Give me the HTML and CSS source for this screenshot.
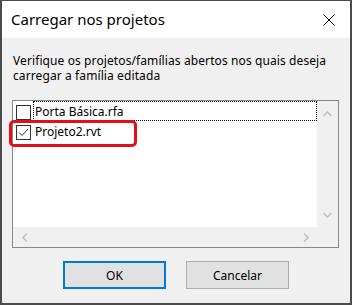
FILE: index.html
```html
<!DOCTYPE html>
<html lang="pt">
<head>
<meta charset="utf-8">
<title>Carregar nos projetos</title>
<link rel="stylesheet" href="styles.css">
</head>
<body>
<div class="window">
  <div class="titlebar">
    <span class="title">Carregar nos projetos</span>
    <svg class="close" width="12" height="12" viewBox="0 0 12 12"><path d="M0.5 0.5 L11.5 11.5 M11.5 0.5 L0.5 11.5" stroke="#000" stroke-width="1" fill="none"/></svg>
  </div>
  <div class="content">
    <p class="prompt">Verifique os projetos/famílias abertos nos quais deseja carregar a família editada</p>
    <div class="listbox">
      <div class="items">
        <div class="item focused">
          <span class="check"></span>
          <span class="label">Porta Básica.rfa</span>
        </div>
        <div class="item">
          <span class="check"><svg width="13" height="13" viewBox="0 0 13 13"><path d="M2 6.5 L5 9.5 L11 3" stroke="#333" stroke-width="1" fill="none"/></svg></span>
          <span class="label">Projeto2.rvt</span>
        </div>
      </div>
      <div class="vscroll">
        <svg width="9" height="6" viewBox="0 0 9 6"><path d="M0.5 5 L4.5 1 L8.5 5" stroke="#c2c2c2" stroke-width="1.6" fill="none"/></svg>
        <svg width="9" height="6" viewBox="0 0 9 6"><path d="M0.5 1 L4.5 5 L8.5 1" stroke="#c2c2c2" stroke-width="1.6" fill="none"/></svg>
      </div>
      <div class="hscroll">
        <svg width="6" height="9" viewBox="0 0 6 9"><path d="M5 0.5 L1 4.5 L5 8.5" stroke="#c2c2c2" stroke-width="1.6" fill="none"/></svg>
        <svg width="6" height="9" viewBox="0 0 6 9"><path d="M1 0.5 L5 4.5 L1 8.5" stroke="#c2c2c2" stroke-width="1.6" fill="none"/></svg>
      </div>
      <div class="corner"></div>
      <div class="highlight"></div>
    </div>
    <div class="buttons">
      <button class="btn default">OK</button>
      <button class="btn">Cancelar</button>
    </div>
  </div>
</div>
</body>
</html>
```

FILE: styles.css
```css
html, body {
  margin: 0;
  padding: 0;
}
body {
  width: 352px;
  height: 305px;
  overflow: hidden;
  font-family: "Noto Sans", "Open Sans", sans-serif;
}
.window {
  box-sizing: border-box;
  width: 352px;
  height: 305px;
  border-style: solid;
  border-color: #4b4b4b;
  border-width: 1px 2px 2px 2px;
  display: flex;
  flex-direction: column;
  background: #f0f0f0;
}
.titlebar {
  height: 37px;
  background: #fff;
  display: flex;
  align-items: center;
  justify-content: space-between;
  padding: 0 15px 0 9px;
}
.title {
  font-size: 15px;
  color: #000;
  margin-top: -1px;
}
.close {
  display: block;
}
.content {
  flex: 1;
  padding: 15px 0 0 10px;
  display: flex;
  flex-direction: column;
}
.prompt {
  margin: 0 0 0 1px;
  font-size: 12px;
  line-height: 15px;
  letter-spacing: 0.1px;
  color: #000;
  width: 334px;
}
.listbox {
  position: relative;
  box-sizing: border-box;
  margin-top: 17px;
  width: 327px;
  height: 148px;
  border: 1px solid #828790;
  display: grid;
  grid-template-columns: 1fr 21px;
  grid-template-rows: 1fr 20px;
  background: #f0f0f0;
}
.items {
  background: #fff;
  display: flex;
  flex-direction: column;
}
.item {
  height: 20px;
  display: flex;
  align-items: center;
  position: relative;
}
.check {
  box-sizing: border-box;
  width: 15px;
  height: 15px;
  border: 1px solid #333;
  background: #fff;
  margin: 2px 2px 0 3px;
  display: flex;
  align-items: center;
  justify-content: center;
}
.check svg {
  display: block;
}
.label {
  font-size: 12px;
  color: #000;
  flex: 1;
  height: 20px;
  line-height: 19px;
  box-sizing: border-box;
  padding-left: 1px;
  border: 1px dotted transparent;
}
.focused .label {
  border-color: #000;
}
.vscroll {
  display: flex;
  flex-direction: column;
  align-items: center;
  justify-content: space-between;
  padding: 10px 0 9px;
}
.hscroll {
  display: flex;
  align-items: center;
  justify-content: space-between;
  padding: 0 8px 0 9px;
}
.vscroll svg, .hscroll svg {
  display: block;
}
.corner {
  background: #f0f0f0;
}
.highlight {
  position: absolute;
  left: -4px;
  top: 19px;
  width: 128px;
  height: 27px;
  box-sizing: border-box;
  border: 3px solid #e3101c;
  border-radius: 5px;
}
.buttons {
  margin-top: 13px;
  display: flex;
  justify-content: center;
  gap: 20px;
  padding-right: 10px;
}
.btn {
  box-sizing: border-box;
  width: 103px;
  height: 28px;
  background: #e1e1e1;
  border: 1px solid #adadad;
  font-family: "Noto Sans", "Open Sans", sans-serif;
  font-size: 12px;
  color: #000;
  padding: 0;
  margin: 0;
}
.btn.default {
  border: 2px solid #0078d7;
}
```
